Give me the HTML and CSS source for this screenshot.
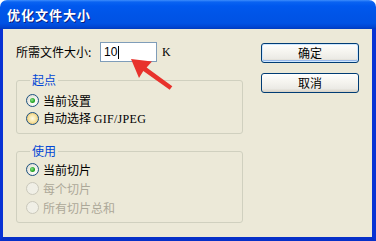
FILE: index.html
```html
<!DOCTYPE html>
<html lang="zh-CN">
<head>
<meta charset="utf-8">
<title>优化文件大小</title>
<link rel="stylesheet" href="styles.css">
</head>
<body>
<div class="window">
  <div class="titlebar"><span class="title">优化文件大小</span></div>
  <div class="client">
    <div class="main">
      <div class="size-row">
        <span class="lbl">所需文件大小:</span>
        <div class="input"><span class="val">10</span><span class="caret"></span></div>
        <span class="unit">K</span>
      </div>
      <fieldset class="group g1">
        <legend>起点</legend>
        <div class="opt"><span class="radio checked"></span><span>当前设置</span></div>
        <div class="opt"><span class="radio hot"></span><span>自动选择 <span class="latin">GIF/JPEG</span></span></div>
      </fieldset>
      <fieldset class="group g2">
        <legend>使用</legend>
        <div class="opt"><span class="radio checked"></span><span>当前切片</span></div>
        <div class="opt disabled"><span class="radio"></span><span>每个切片</span></div>
        <div class="opt disabled"><span class="radio"></span><span>所有切片总和</span></div>
      </fieldset>
    </div>
    <div class="buttons">
      <div class="btn default">确定</div>
      <div class="btn">取消</div>
    </div>
  </div>
  <svg class="arrow" width="376" height="241" viewBox="0 0 376 241">
    <polygon points="131,59 152,61.5 146.6,67.5 172.3,86.2 169.7,89.8 143.3,71 139,78" fill="#e8322c"/>
  </svg>
</div>
</body>
</html>
```
FILE: styles.css
```css
html, body {
  margin: 0;
  padding: 0;
  background: #ffffff;
}
body {
  font-family: "Noto Sans CJK SC", "Liberation Sans", sans-serif;
  font-size: 12px;
  color: #000;
}
.window {
  position: relative;
  width: 376px;
  height: 241px;
  display: flex;
  flex-direction: column;
  overflow: hidden;
}
.titlebar {
  height: 29px;
  flex: 0 0 29px;
  box-sizing: border-box;
  border-radius: 7px 7px 0 0;
  background: linear-gradient(to bottom, #3d8dfc 0, #0a63f2 2px, #0058ee 6px, #0055e8 45%, #0052e4 80%, #0046d4 92%, #003bbf 100%);
  display: flex;
  align-items: center;
  padding-left: 7px;
}
.title {
  color: #fff;
  font-weight: bold;
  font-size: 13px;
  letter-spacing: 1px;
  text-shadow: 1px 1px 0 #0a1e80;
}
.client {
  flex: 1;
  background: #ece9d8;
  border-left: 3px solid #0832d4;
  border-right: 4px solid #0832d4;
  border-bottom: 4px solid #0730c8;
  display: flex;
  padding: 13px 0 0 13px;
}
.main {
  width: 227px;
  display: flex;
  flex-direction: column;
}
.size-row {
  display: flex;
  align-items: center;
  height: 20px;
}
.lbl {
  width: 84px;
  line-height: 14px;
}
.input {
  width: 57px;
  height: 20px;
  box-sizing: border-box;
  border: 1px solid #7f9db9;
  background: #fff;
  display: flex;
  align-items: center;
  padding-left: 3px;
  font-family: "Liberation Sans", sans-serif;
  font-size: 12px;
}
.caret {
  width: 1px;
  height: 13px;
  background: #000;
  margin-left: 1px;
}
.unit {
  margin-left: 5px;
  font-family: "Liberation Serif", serif;
  font-size: 12px;
}
.group {
  margin: 11px 0 0 0;
  padding: 4px 8px 6px 9px;
  border: 1px solid #d0d0bf;
  border-radius: 3px;
  min-width: 0;
}
.g2 {
  margin-top: 10px;
  padding-top: 2px;
  padding-bottom: 5px;
}
.group legend {
  color: #0046d5;
  padding: 0 2px;
  margin-left: 4px;
  line-height: 14px;
}
.opt {
  display: flex;
  align-items: center;
  height: 18px;
}
.g2 .opt {
  height: 19px;
}
.opt.disabled {
  color: #aca899;
}
.latin {
  font-family: "Liberation Serif", serif;
  letter-spacing: 0.3px;
}
.radio {
  width: 13px;
  height: 13px;
  box-sizing: border-box;
  border-radius: 50%;
  border: 1px solid #1c5180;
  background: radial-gradient(circle at 65% 65%, #ffffff 0, #f4f3ee 40%, #d4d2c4 100%);
  margin-right: 4px;
  flex: 0 0 13px;
  display: flex;
  align-items: center;
  justify-content: center;
}
.radio.checked::after {
  content: "";
  width: 5px;
  height: 5px;
  border-radius: 50%;
  background: radial-gradient(circle at 40% 40%, #8ce48c 0, #21a121 60%, #1a8a1a 100%);
}
.radio.hot {
  background: radial-gradient(circle at 50% 50%, #fffbe8 0, #f8e6a8 45%, #e8b450 100%);
}
.disabled .radio {
  border-color: #cac8bb;
  background: #f0efe6;
}
.buttons {
  margin-left: 18px;
  display: flex;
  flex-direction: column;
  gap: 10px;
  padding-top: 1px;
}
.btn {
  width: 98px;
  height: 20px;
  box-sizing: border-box;
  border: 1px solid #003c74;
  border-radius: 3px;
  background: linear-gradient(to bottom, #ffffff 0, #f6f5f0 40%, #ecebe6 80%, #d6d0c5 100%);
  display: flex;
  align-items: center;
  justify-content: center;
  line-height: 14px;
}
.btn.default {
  box-shadow: inset 0 0 0 1px #cee7ff, inset 0 -1px 0 1px #98b8ea;
}
.arrow {
  position: absolute;
  left: 0;
  top: 0;
  pointer-events: none;
}
```
